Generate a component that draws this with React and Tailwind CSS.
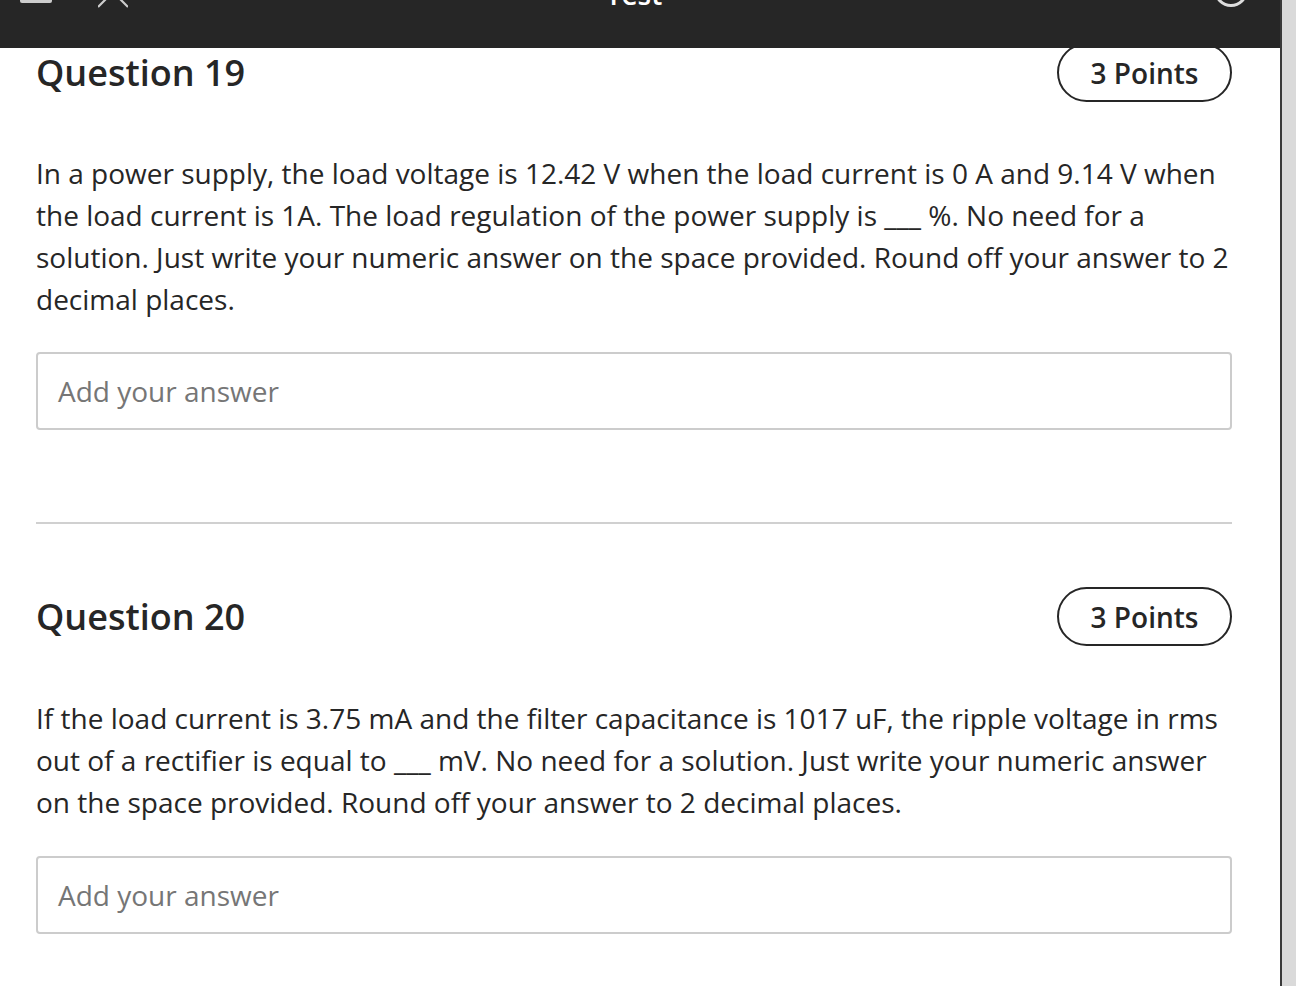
import React from "react";

const font = { fontFamily: '"Open Sans", "Noto Sans", sans-serif' };

function Pill() {
  return (
    <div className="flex h-[59px] w-[175px] items-center justify-center rounded-full border-2 border-[#262626] text-[28px] font-semibold text-[#262626]">
      3 Points
    </div>
  );
}

function AnswerBox() {
  return (
    <div className="flex h-[78px] items-center rounded-[4px] border-2 border-[#cccccc] px-5 text-[28px] text-[#767676]">
      Add your answer
    </div>
  );
}

function Question({ n, children, paraMt, boxMt }) {
  return (
    <section>
      <div className="flex items-center justify-between">
        <h2 className="pt-[2px] text-[36px] font-semibold leading-[1.4] text-[#262626]">Question {n}</h2>
        <Pill />
      </div>
      <p className={`${paraMt} text-[28px] leading-[42px] text-[#262626]`}>{children}</p>
      <div className={boxMt}>
        <AnswerBox />
      </div>
    </section>
  );
}

export default function App() {
  return (
    <div className="relative flex h-[986px] w-[1296px] overflow-hidden bg-white" style={font}>
      <header className="absolute left-0 top-0 z-10 flex h-[48px] w-[1280px] items-start justify-between overflow-hidden bg-[#262626]">
        <div className="flex items-start">
          <div className="ml-[20px] h-[3px] w-[32px] rounded-b-[2px] bg-[#cccccc]" />
          <svg className="ml-[46px] -mt-[20px]" width="30" height="30" viewBox="0 0 30 30">
            <path d="M0 27 L27 0 M30 27 L3 0" stroke="#cccccc" strokeWidth="2.2" fill="none" />
          </svg>
        </div>
        <div className="-mt-[20px] ml-[-74px] text-[28px] font-semibold leading-[1] text-white">Test</div>
        <svg className="mr-[32px] -mt-[27px]" width="34" height="34" viewBox="0 0 34 34">
          <circle cx="17" cy="17" r="15.5" stroke="#dddddd" strokeWidth="3" fill="none" />
        </svg>
      </header>

      <main className="flex-1 pl-[36px] pr-[48px] pt-[43px]">
        <Question n={19} paraMt="mt-[50px]" boxMt="mt-[32px]">
          In a power supply, the load voltage is 12.42 V when the load current is 0 A and 9.14 V when
          the load current is 1A. The load regulation of the power supply is ___ %. No need for a
          solution. Just write your numeric answer on the space provided. Round off your answer to 2
          decimal places.
        </Question>

        <div className="mt-[92px] h-[2px] bg-[#d0d0d0]" />

        <div className="mt-[63px]">
          <Question n={20} paraMt="mt-[51px]" boxMt="mt-[33px]">
            If the load current is 3.75 mA and the filter capacitance is 1017 uF, the ripple voltage in rms
            out of a rectifier is equal to ___ mV. No need for a solution. Just write your numeric answer
            on the space provided. Round off your answer to 2 decimal places.
          </Question>
        </div>
      </main>

      {/* scrollbar strip */}
      <div className="h-full w-[16px] border-l-2 border-[#3a3a3a] bg-[#dadada]" />
    </div>
  );
}
